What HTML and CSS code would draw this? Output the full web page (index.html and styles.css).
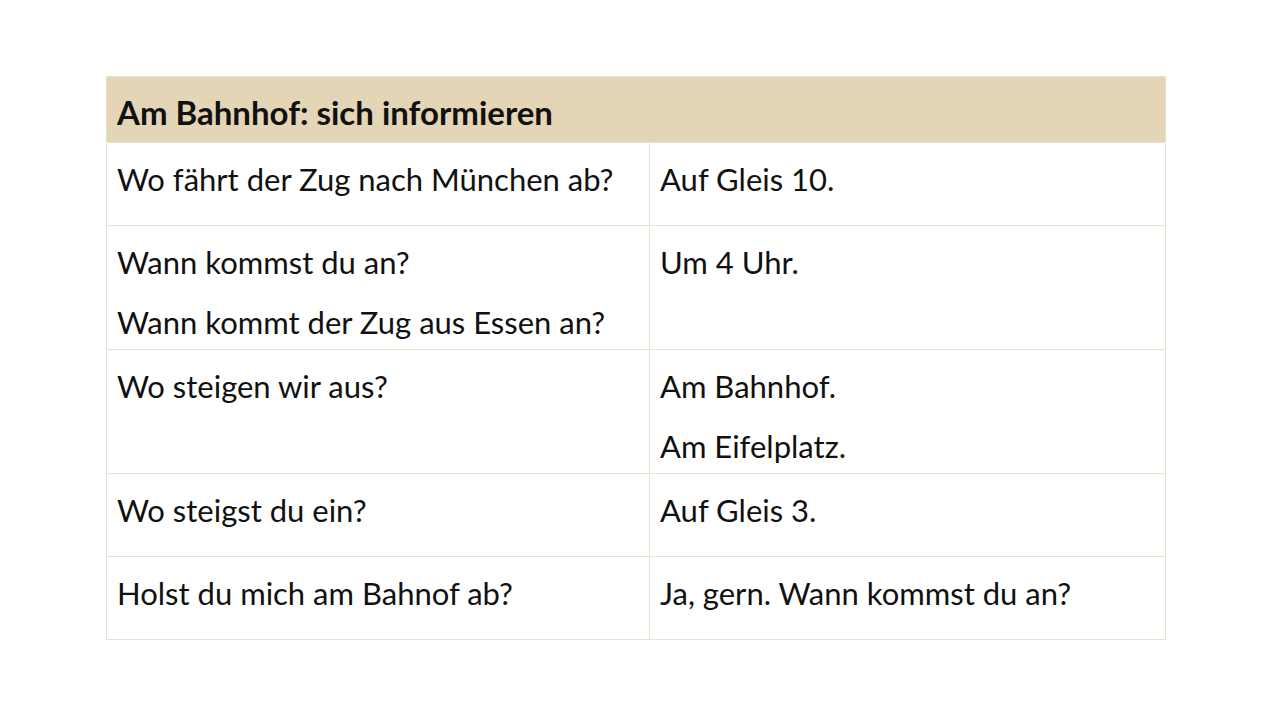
FILE: index.html
```
<!DOCTYPE html>
<html>

<head>
  <meta charset="utf-8">
  <title>Am Bahnhof: sich informieren</title>
  <link rel="stylesheet" href="styles.css">
</head>

<body>
  <table class="phrase-table">
    <tr>
      <th colspan="2">Am Bahnhof: sich informieren</th>
    </tr>
    <tr>
      <td class="col-ask"><p>Wo fährt der Zug nach München ab?</p></td>
      <td><p>Auf Gleis 10.</p></td>
    </tr>
    <tr>
      <td class="col-ask"><p>Wann kommst du an?</p><p>Wann kommt der Zug aus Essen an?</p></td>
      <td><p>Um 4 Uhr.</p></td>
    </tr>
    <tr>
      <td class="col-ask"><p>Wo steigen wir aus?</p></td>
      <td><p>Am Bahnhof.</p><p>Am Eifelplatz.</p></td>
    </tr>
    <tr>
      <td class="col-ask"><p>Wo steigst du ein?</p></td>
      <td><p>Auf Gleis 3.</p></td>
    </tr>
    <tr>
      <td class="col-ask"><p>Holst du mich am Bahnof ab?</p></td>
      <td><p>Ja, gern. Wann kommst du an?</p></td>
    </tr>
  </table>
</body>

</html>
```

FILE: styles.css
```
body {
  margin: 0;
  background-color: #fff;
  color: #111;
  font-family: Lato, "Noto Sans", sans-serif;
  padding: 76px 114px 0 106px;
}

.phrase-table {
  width: 1060px;
  border-collapse: collapse;
  border: 1px solid #e8e3cd;
}

.phrase-table th {
  background-color: #e3d5b5;
  text-align: left;
  font-size: 33px;
  font-weight: 700;
  height: 66px;
  padding: 4px 10px 0;
  box-sizing: border-box;
}

.phrase-table td {
  vertical-align: top;
  border: 1px solid #e8e3cd;
  font-size: 31px;
  padding: 14px 10px 5px;
  height: 83px;
  box-sizing: border-box;
}

.col-ask {
  width: 543px;
}

.phrase-table p {
  margin: 0;
  line-height: 44px;
}

.phrase-table p + p {
  margin-top: 16px;
}
```
